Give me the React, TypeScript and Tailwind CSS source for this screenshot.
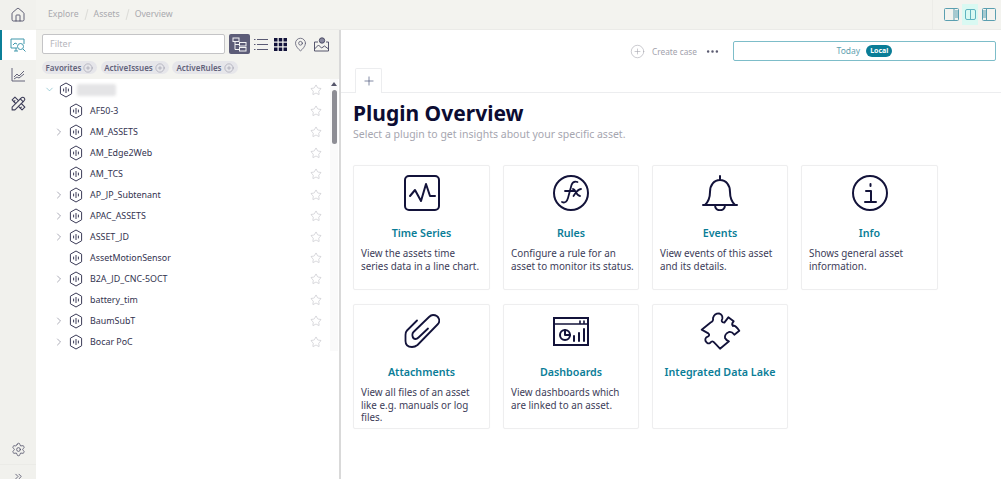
import React from "react";
import { House, Settings, ChevronsRight, ChevronDown, ChevronRight, Star, Plus, CirclePlus, MapPin, Ellipsis } from "lucide-react";
import { TbTools } from "react-icons/tb";

const Hex = () => (
  <svg viewBox="0 0 14 16" className="w-[14px] h-[16px] shrink-0" fill="none" stroke="#3c3c58" strokeWidth="1">
    <path d="M7 1l5.6 3.2v7.6L7 15l-5.6-3.2V4.2z" />
    <path d="M4.6 6.600v2.800M7 5v6M9.4 6.600v2.800" />
  </svg>
);

const rows: [string, boolean][] = [
  ["AF50-3", false],
  ["AM_ASSETS", true],
  ["AM_Edge2Web", false],
  ["AM_TCS", false],
  ["AP_JP_Subtenant", true],
  ["APAC_ASSETS", true],
  ["ASSET_JD", true],
  ["AssetMotionSensor", false],
  ["B2A_JD_CNC-5OCT", true],
  ["battery_tim", false],
  ["BaumSubT", true],
  ["Bocar PoC", true],
];

const S = ({ children, w = 36, h = 36 }: { children: React.ReactNode; w?: number; h?: number }) => (
  <svg width={w} height={h} viewBox={`0 0 ${w} ${h}`} fill="none" stroke="#13133a" strokeWidth="2" strokeLinejoin="round" strokeLinecap="round">
    {children}
  </svg>
);

const cards: { title: string; desc: string[]; icon: React.ReactNode }[] = [
  {
    title: "Time Series",
    desc: ["View the assets time", "series data in a line chart."],
    icon: (
      <S>
        <rect x="1" y="1" width="34" height="34" rx="4" />
        <path d="M6 21l5-6 6 11 5-17 4 12h5" />
      </S>
    ),
  },
  {
    title: "Rules",
    desc: ["Configure a rule for an", "asset to monitor its status."],
    icon: (
      <S>
        <circle cx="18" cy="18" r="17" />
        <path strokeWidth="1.8" d="M9 27c3 1.500 5-.5 6-4l3.500-13c1-3 3-4 6-3M12 16h9M20 14c3 0 3 7 7 7M28 14c-3 0-5 3-7.500 7" />
      </S>
    ),
  },
  {
    title: "Events",
    desc: ["View events of this asset", "and its details."],
    icon: (
      <S>
        <path d="M18 1v4M3 30c3-3 5-6 5-13 0-7 4-12 10-12s10 5 10 12c0 7 2 10 5 13zM1 30h34M13 30c0 7 10 7 10 0" />
      </S>
    ),
  },
  {
    title: "Info",
    desc: ["Shows general asset", "information."],
    icon: (
      <S>
        <circle cx="18" cy="18" r="17" />
        <path d="M14 16h5v11M13 27h11M18.500 9v2" />
      </S>
    ),
  },
  {
    title: "Attachments",
    desc: ["View all files of an asset", "like e.g. manuals or log", "files."],
    icon: (
      <S>
        <path strokeWidth="1.800" d="M13 6.500L3 16.500Q1.500 18 1.500 21V27Q1.500 33 8 33Q11 33 13.500 31L33.500 10.500Q36 8 35 5Q33.500 1 29 1Q27 1 25 3L9.500 18Q8 19.500 8.500 22Q9 25 11.500 25Q13 25 14.500 23.500L24 14.500" />
      </S>
    ),
  },
  {
    title: "Dashboards",
    desc: ["View dashboards which", "are linked to an asset."],
    icon: (
      <S>
        <rect x="1" y="4" width="34" height="27" strokeLinejoin="miter" />
        <path d="M1 10h34M27 7v2M31 7v2" strokeWidth="1.600" />
        <circle cx="12" cy="21" r="5" />
        <path d="M12 16v5h5M21 22v5M26 19v8M31 15v12" />
      </S>
    ),
  },
  {
    title: "Integrated Data Lake",
    desc: [],
    icon: (
      <svg width="50" height="48" viewBox="0 0 150 144" fill="none" stroke="#13133a" strokeWidth="5.500" strokeLinejoin="round" className="shrink-0">
        <path d="M20 65L46 44Q56 40 54 30Q58 16 72 16Q84 20 82 32Q76 42 88 44L100 28L116 40Q108 48 114 54Q120 50 133 68L118 80Q110 70 102 72Q88 78 90 90Q94 98 102 100L75 122L58 104Q52 96 46 104Q38 110 32 100Q28 90 38 86Q46 82 40 76Z" />
      </svg>
    ),
  },
];

export default function App() {
  return (
    <div className="flex h-[479px] w-[1001px] overflow-hidden bg-white text-[10px] text-[#3c3c58] [font-family:'Noto_Sans',sans-serif]">
      {/* rail */}
      <nav className="flex w-[36px] shrink-0 flex-col bg-[#f1f1ed]">
        <div className="flex h-[29px] items-center justify-center">
          <House size={16} strokeWidth={1.2} color="#3c3c58" />
        </div>
        <div className="mt-[1px] flex h-[30px] items-center justify-center border-l-2 border-[#0b7f98] bg-white pr-[2px]">
          <svg width="16" height="16" viewBox="0 0 16 16" fill="none" stroke="#3f97ab" strokeWidth="1">
            <path d="M7 11H1V2h13v5M4 14h4M6 11v3M3 8l2-2 2 1" />
            <circle cx="10.500" cy="9.500" r="3" />
            <path d="M13 12l2.500 2.500" />
          </svg>
        </div>
        <div className="flex h-[30px] items-center justify-center">
          <svg width="14" height="14" viewBox="0 0 14 14" fill="none" stroke="#55556d" strokeWidth="0.9">
            <path d="M1 0v13h13M3 9l3-3 2 2 5-5M3 11l3-2 2 1 5-4" />
          </svg>
        </div>
        <div className="flex h-[26px] items-center justify-center">
          <TbTools size={17} strokeWidth={1.5} color="#3c3c58" />
        </div>
        <div className="flex-1" />
        <div className="flex h-[30px] items-center justify-center">
          <Settings size={15} strokeWidth={1.2} color="#45455f" />
        </div>
        <div className="flex h-[15px] items-start justify-center border-t border-[#ebebe7] pt-[6px]">
          <ChevronsRight size={11} strokeWidth={1.6} color="#3c3c58" />
        </div>
      </nav>

      <div className="flex min-w-0 flex-1 flex-col">
        {/* top bar */}
        <header className="flex h-[30px] shrink-0 items-center border-b border-[#ebebe8] bg-[#f3f3ef] pl-[12px] text-[8.700px] text-[#a9a9ae]">
          <span className="pt-[1px]">Explore</span>
          <span className="mx-[7px] h-[11px] w-px rotate-[15deg] bg-[#dcdcd8]" />
          <span className="pt-[1px]">Assets</span>
          <span className="mx-[7px] h-[11px] w-px rotate-[15deg] bg-[#dcdcd8]" />
          <span className="pt-[1px]">Overview</span>
          <div className="ml-auto flex h-full items-center border-l border-[#ecece8] pl-[11px] pr-[5px]">
            <svg width="15" height="13" viewBox="0 0 15 13" fill="none" stroke="#5a9fb0" strokeWidth="1">
              <rect x="0.500" y="0.500" width="14" height="12" rx="1" />
              <path d="M10 1v11M11 3h3M11 5h3M11 7h3M11 9h3" />
            </svg>
            <span className="ml-[3px] flex h-[21px] w-[16px] items-center justify-center bg-[#d9f9f2]">
              <svg width="11" height="11" viewBox="0 0 11 11" fill="none" stroke="#5fb3c0" strokeWidth="1">
                <rect x="0.500" y="0.500" width="10" height="10" rx="1.500" />
                <path d="M5.500 1v9" />
              </svg>
            </span>
            <svg className="ml-[4px]" width="14" height="13" viewBox="0 0 14 13" fill="none" stroke="#5a9fb0" strokeWidth="1">
              <rect x="0.500" y="0.500" width="13" height="12" rx="1" />
              <path d="M4.500 1v11M1 3h3M1 5h3M1 7h3M1 9h3" />
            </svg>
          </div>
        </header>

        <div className="flex min-h-0 flex-1">
          {/* left panel */}
          <aside className="flex w-[303px] shrink-0 flex-col">
            <div className="flex h-[49px] shrink-0 flex-col bg-[#f3f3ef] pl-[6px] pt-[4px]">
              <div className="flex h-[20px] items-center">
                <div className="flex h-[20px] w-[183px] items-center rounded-[2px] border border-[#c4c4c6] bg-white pl-[7px] text-[9px] text-[#b6b6bc]">Filter</div>
                <div className="ml-[4px] flex h-[20px] w-[21px] items-center justify-center rounded-[2px] bg-[#5c5c78]">
                  <svg width="15" height="15" viewBox="0 0 15 15" fill="none" stroke="#f3f3f5" strokeWidth="1">
                    <rect x="1" y="1" width="6" height="3.500" />
                    <rect x="7.500" y="5.500" width="6.500" height="3.500" />
                    <rect x="7.500" y="10.500" width="6.500" height="3.500" />
                    <path d="M3 4.500V12.500H7.500M3 7.500H7.500" />
                  </svg>
                </div>
                <svg className="ml-[4px]" width="14" height="13" viewBox="0 0 14 13" stroke="#5a5a74" strokeWidth="1">
                  <path d="M0 1.500h1.500M3 1.500h11M0 6.500h1.500M3 6.500h11M0 11.500h1.500M3 11.500h11" />
                </svg>
                <svg className="ml-[6px]" width="13" height="13" viewBox="0 0 13 13" fill="#12123a">
                  <path d="M0 0h3.500v3.500H0zM4.750 0h3.500v3.500h-3.500zM9.500 0H13v3.500H9.500zM0 4.750h3.500v3.500H0zM4.750 4.750h3.500v3.500h-3.500zM9.500 4.750H13v3.500H9.500zM0 9.500h3.500V13H0zM4.750 9.500h3.500V13h-3.500zM9.500 9.500H13V13H9.500z" />
                </svg>
                <MapPin className="ml-[6px]" size={15} strokeWidth={1.1} color="#45455f" />
                <svg className="ml-[6px]" width="15" height="15" viewBox="0 0 15 15" fill="none" stroke="#45455f" strokeWidth="0.9">
                  <path d="M4 5H.5v9h14V5H12M.5 12l4-4 3 3 3-2 4 3" />
                  <circle cx="8" cy="3.500" r="2.700" fill="#8a8aa0" />
                </svg>
              </div>
              <div className="mt-[7px] flex h-[13px] gap-[3.500px] text-[8px] font-semibold leading-none text-[#62627a]">
                {[["Favorites", "w-[55px]"], ["ActiveIssues", "w-[68px]"], ["ActiveRules", "w-[66px]"]].map(([t, w]) => (
                  <span key={t} className={`flex ${w} items-center justify-center gap-[2px] rounded-full bg-[#e6e6ea]`}>
                    {t}
                    <CirclePlus size={10} strokeWidth={1} color="#7c7c90" />
                  </span>
                ))}
              </div>
            </div>
            <div className="flex min-h-0 flex-1">
              <ul className="w-[294px]">
                <li className="flex h-[21px] items-center pr-[8px]">
                  <span className="flex w-[23px] justify-end pr-[4px]">
                    <ChevronDown size={11} strokeWidth={1.1} color="#4ba3b5" />
                  </span>
                  <Hex />
                  <span className="ml-[4px] h-[12px] w-[39px] rounded-[2px] bg-[#e4e4e6] blur-[1.500px]" />
                  <Star className="ml-auto" size={12} strokeWidth={0.9} color="#a9a9b2" />
                </li>
                {rows.map(([name, arrow]) => (
                  <li key={name} className="flex h-[21px] items-center pr-[8px]">
                    <span className="flex w-[33px] justify-end pr-[4px]">
                      {arrow && <ChevronRight size={12} strokeWidth={1} color="#5a5a70" />}
                    </span>
                    <Hex />
                    <span className="ml-[7px] text-[8.900px] text-[#33334f]">{name}</span>
                    <Star className="ml-auto" size={12} strokeWidth={0.9} color="#a9a9b2" />
                  </li>
                ))}
              </ul>
              <div className="flex h-[272px] w-[8px] flex-col items-center bg-[#fafafa]">
                <span className="mt-[3px] h-0 w-0 border-x-[3.500px] border-b-[4px] border-x-transparent border-b-[#55556a]" />
                <span className="mt-[4px] h-[54px] w-[5px] rounded-full bg-[#8d8d94]" />
              </div>
            </div>
          </aside>

          {/* splitter */}
          <div className="w-[2px] shrink-0 bg-[#d9d9d9]" />

          {/* main */}
          <main className="min-w-0 flex-1">
            <div className="flex h-[38px] items-start justify-end pr-[5px] pt-[11px]">
              <div className="flex h-[20px] items-center text-[8.300px] text-[#a2a2ac]">
                <CirclePlus size={15} strokeWidth={0.9} color="#a2a2ac" />
                <span className="ml-[7px] mt-[2px]">Create case</span>
                <Ellipsis className="ml-[8px] mt-[1px]" size={15} strokeWidth={2} color="#5a5a70" />
                <div className="ml-[13px] flex h-[20px] w-[263px] items-center justify-center gap-[6px] rounded-[2px] border border-[#7dbdc9] text-[8.500px] text-[#5f9fb0]">
                  <span>Today</span>
                  <span className="rounded-full bg-[#0a7d97] px-[4px] text-[7px] font-bold leading-[12px] text-white">Local</span>
                </div>
              </div>
            </div>
            <div className="flex h-[25px] border-b border-[#ecedef] pl-[14px]">
              <div className="flex h-[25px] w-[27px] items-center justify-center rounded-t-[2px] border-x border-t border-[#ecedef] bg-white">
                <Plus size={14} strokeWidth={1.1} color="#3c4a70" />
              </div>
            </div>
            <div className="pl-[12px]">
              <h1 className="mt-[5px] text-[21px] font-bold leading-[30px] text-[#0c0c32]">Plugin Overview</h1>
              <p className="-mt-[1px] text-[10.500px] leading-[14px] text-[#a6a6b0]">Select a plugin to get insights about your specific asset.</p>
              <div className="mt-[24px] grid w-[585px] grid-cols-[137px_136px_136px_137px] grid-rows-[125px_125px] gap-x-[13px] gap-y-[14px]">
                {cards.map((c) => (
                  <section key={c.title} className="flex flex-col items-center rounded-[2px] border border-[#eeeeef] pt-[9px] shadow-[0_0_1px_#00000010]">
                    <div className="flex h-[36px] items-center justify-center">{c.icon}</div>
                    <h2 className="mt-[12px] text-[10.700px] font-semibold leading-[20px] text-[#0a7d97]">{c.title}</h2>
                    <p className="mt-[4px] w-full pl-[7px] text-[9.850px] leading-[12.500px] text-[#3c3c58]">
                      {c.desc.map((l) => (
                        <span key={l} className="block whitespace-nowrap">{l}</span>
                      ))}
                    </p>
                  </section>
                ))}
              </div>
            </div>
          </main>
        </div>
      </div>
    </div>
  );
}
